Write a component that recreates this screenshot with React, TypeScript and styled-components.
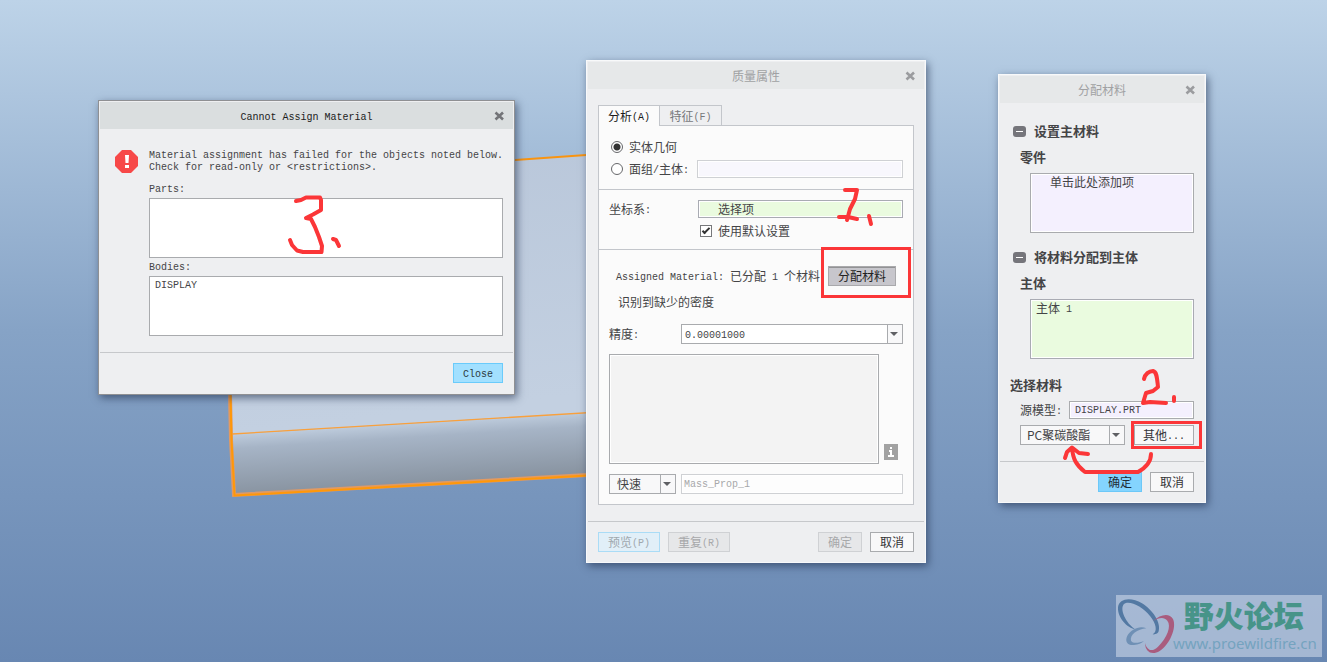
import React from "react";
import styled, { createGlobalStyle, css } from "styled-components";

const CJK = `"Noto Sans CJK SC", sans-serif`;
const MONO = `"Liberation Mono", "Noto Sans CJK SC", monospace`;

const GlobalStyle = createGlobalStyle`
  *, *::before, *::after { box-sizing: border-box; }
  body { margin: 0; }
  button, input, select, textarea { font: inherit; color: inherit; margin: 0; border-radius: 0; }
`;

const Desktop = styled.main`
  position: relative;
  min-height: 100vh;
  min-width: 1206px;
  overflow: hidden;
  background: linear-gradient(#bdd3e8 0%, #86a3c6 50%, #6887b2 100%);
  font-family: ${CJK};
  font-size: 12px;
  line-height: 20px;
  color: #444446;
`;

const Scene = styled.svg`
  position: absolute;
  left: 0;
  top: 0;
`;

const Marks = styled(Scene)`
  pointer-events: none;
  fill: none;
  stroke: #fb3638;
  stroke-width: 4;
  stroke-linecap: round;
  stroke-linejoin: round;
`;

const Latin = styled.span`
  font-family: ${MONO};
  font-size: 10px;
  line-height: 10px;
  vertical-align: 1px;
  white-space: pre;
`;

/* ---------- windows ---------- */

const Window = styled.section<{ $x: number; $y: number; $w: number; $active?: boolean }>`
  position: absolute;
  left: ${(p) => p.$x}px;
  top: ${(p) => p.$y}px;
  width: ${(p) => p.$w}px;
  padding: 1px;
  background: #eeeff1;
  border: 1px solid ${(p) => (p.$active ? "#8f9093" : "#f8f9fa")};
  box-shadow: 2px 3px 8px rgba(30, 45, 75, 0.6);
`;

const TitleBar = styled.header<{ $active?: boolean }>`
  display: grid;
  grid-template-columns: 28px 1fr 28px;
  align-items: center;
  height: 27px;
  background: ${(p) => (p.$active ? "#dadedf" : "#e6e8e9")};
  color: ${(p) => (p.$active ? "#1c1c1c" : "#a0a1a3")};
`;

const Title = styled.h1`
  grid-column: 2;
  margin: 0;
  font-size: 12px;
  font-weight: 400;
  text-align: center;
`;

const CloseButton = styled.button`
  display: grid;
  place-items: center;
  height: 20px;
  padding: 0;
  border: 0;
  background: none;
`;

const Footer = styled.footer<{ $bottom: number }>`
  display: flex;
  gap: 8px;
  padding: 10px 10px ${(p) => p.$bottom}px;
  border-top: 1px solid #c6c8cb;
`;

const Spacer = styled.span`
  flex: 1;
`;

const tones = {
  plain: css`background: #f8f8f9; border-color: #a9abae; color: #333336;`,
  disabled: css`background: #e6e7e9; border-color: #cfd1d4; color: #a7a8aa;`,
  preview: css`background: #e1eff8; border-color: #aadcf6; color: #a0a8ae;`,
  primary: css`background: #84d4fe; border-color: #6cc8f8; color: #1f2c36;`,
  close: css`background: #a2e0ff; border-color: #6acbfb; color: #2c3a42;`,
  pressed: css`background: #c7c6cc; border-color: #a9a9ac; box-shadow: inset 0 1px 0 #929294; color: #222;`,
};

const Button = styled.button<{ $w: number; $tone?: keyof typeof tones }>`
  width: ${(p) => p.$w}px;
  height: 20px;
  padding: 0;
  border: 1px solid;
  line-height: 18px;
  white-space: nowrap;
  ${(p) => tones[p.$tone ?? "plain"]}
`;

/* ---------- fields ---------- */

const fieldTones = {
  faint: css`background: #f8f7fd; border-color: #cfd1d4;`,
  lilac: css`background: #f4f0fe; border-color: #a9abae;`,
  green: css`background: #eafbdf; border-color: #a9abb3;`,
  white: css`background: #fff; border-color: #a9abae;`,
  muted: css`background: #fdfdfd; border-color: #cfd1d4; color: #a7a8aa;`,
};

const latinField = css`
  font-family: ${MONO};
  font-size: 10px;
  padding-top: 2px;
`;

const TextField = styled.input<{ $tone: keyof typeof fieldTones; $indent?: number; $latin?: boolean; $tall?: boolean }>`
  flex: 1;
  min-width: 0;
  height: ${(p) => (p.$tall ? 20 : 18)}px;
  padding: 0 0 0 ${(p) => p.$indent ?? 4}px;
  border: 1px solid;
  box-shadow: inset 0 0 0 1px #fff;
  outline: 0;
  ${(p) => p.$latin && latinField}
  ${(p) => fieldTones[p.$tone]}
`;

const ListBox = styled.ul<{ $tone: keyof typeof fieldTones; $indent?: number }>`
  height: 60px;
  margin: 0;
  padding: 0 0 0 ${(p) => p.$indent ?? 5}px;
  list-style: none;
  line-height: 16px;
  border: 1px solid;
  box-shadow: inset 0 0 0 1px #fff;
  ${(p) => fieldTones[p.$tone]}
`;

const ComboFrame = styled.span<{ $w?: number; $white?: boolean }>`
  position: relative;
  display: flex;
  ${(p) => (p.$w ? `width: ${p.$w}px;` : "flex: 1;")}
  height: 20px;
  border: 1px solid #a9abae;
  background: linear-gradient(to left, #f8f8f9 14px, #a9abae 14px, #a9abae 15px, ${(p) => (p.$white ? "#fff" : "#f8f8f9")} 15px);

  &::after {
    content: "";
    position: absolute;
    right: 4px;
    top: 7px;
    border: 4px solid transparent;
    border-top-color: #5f6064;
    border-bottom: 0;
    pointer-events: none;
  }
`;

const ComboSelect = styled.select<{ $indent: number; $latin?: boolean }>`
  appearance: none;
  flex: 1;
  min-width: 0;
  padding: 0 16px 0 ${(p) => p.$indent}px;
  border: 0;
  outline: 0;
  background: transparent;
  line-height: 18px;
  ${(p) => p.$latin && latinField}
`;

/* ---------- error dialog ---------- */

const ErrorBody = styled.div`
  display: grid;
  grid-template-columns: 24px 1fr;
  column-gap: 10px;
  padding: 21px 10px 16px 15px;
`;

const ErrorText = styled.div`
  font-family: ${MONO};
  font-size: 10px;
  min-width: 0;

  li { line-height: 18px; }
`;

const Message = styled.p`
  margin: 0 0 6px;
  line-height: 12px;
  white-space: nowrap;
`;

const ListLabel = styled.div`
  height: 18px;
  line-height: 20px;
`;

/* ---------- mass properties dialog ---------- */

const MassBody = styled.div`
  padding: 16px 10px;
`;

const Tabs = styled.div`
  display: flex;
  align-items: flex-start;
  margin-bottom: -1px;
`;

const Tab = styled.button<{ $selected?: boolean }>`
  position: relative;
  width: ${(p) => (p.$selected ? 62 : 63)}px;
  height: ${(p) => (p.$selected ? 21 : 20)}px;
  padding: 0;
  border: 1px solid #c3c6cb;
  border-bottom: 0;
  background: ${(p) => (p.$selected ? "#fbfbfb" : "#eeeff1")};
  color: ${(p) => (p.$selected ? "#1c1c1c" : "#77787b")};
  & + & { margin-left: -1px; }
`;

const Panel = styled.div`
  border: 1px solid #c3c6cb;
  background: #fbfbfb;
`;

const Section = styled.div<{ $top: number; $bottom: number; $gap?: number }>`
  display: flex;
  flex-direction: column;
  gap: ${(p) => p.$gap ?? 0}px;
  padding: ${(p) => p.$top}px 10px ${(p) => p.$bottom}px;
  & + & { border-top: 1px solid #c3c6cb; }
`;

const Row = styled.div<{ $gap?: number; $inset?: number; $end?: boolean }>`
  display: flex;
  align-items: ${(p) => (p.$end ? "flex-end" : "center")};
  gap: ${(p) => p.$gap ?? 0}px;
  min-height: 20px;
  padding: 0 ${(p) => p.$inset ?? 0}px;
`;

const Label = styled.label<{ $w?: number }>`
  flex: none;
  white-space: nowrap;
  ${(p) => p.$w && `width: ${p.$w}px;`}
`;

const ChoiceLabel = styled.label<{ $w?: number; $start?: number }>`
  display: flex;
  align-items: center;
  gap: 6px;
  flex: none;
  padding-left: 2px;
  margin-left: ${(p) => p.$start ?? 0}px;
  ${(p) => p.$w && `width: ${p.$w}px;`}
`;

const Radio = styled.input`
  appearance: none;
  width: 12px;
  height: 12px;
  border: 1px solid #66676a;
  && { border-radius: 50%; }
  background: #fff;
  &:checked { background: radial-gradient(circle, #333 0 3px, #fff 4px); }
`;

const Check = styled.input`
  appearance: none;
  width: 12px;
  height: 12px;
  border: 1px solid #77787b;
  background: #fff;
  display: grid;
  place-items: center;
  &:checked::before {
    content: "";
    width: 8px;
    height: 4px;
    border-left: 2px solid #333;
    border-bottom: 2px solid #333;
    transform: translateY(-1px) rotate(-45deg);
  }
`;

const Results = styled.textarea`
  width: 270px;
  height: 110px;
  resize: none;
  border: 1px solid #a9abae;
  background: #f3f3f3;
  box-shadow: inset 0 0 0 1px #fff;
  outline: 0;
`;

const InfoButton = styled.button`
  width: 14px;
  height: 16px;
  margin-bottom: 4px;
  padding: 0;
  border: 0;
  background: #a2a2a2;
  display: grid;
  place-items: center;
`;

const Stack = styled.div<{ $gap: number }>`
  display: flex;
  flex-direction: column;
  gap: ${(p) => p.$gap}px;
`;

/* ---------- assign material dialog ---------- */

const AssignBody = styled.div`
  display: flex;
  flex-direction: column;
  padding: 18px 10px 16px;
`;

const GroupHead = styled.h2<{ $before?: number; $start?: number }>`
  display: flex;
  align-items: center;
  gap: 8px;
  margin: ${(p) => p.$before ?? 0}px 0 0 ${(p) => p.$start ?? 0}px;
  font-size: 13px;
  font-weight: 700;
  line-height: 20px;
`;

const SubHead = styled.h3`
  margin: 6px 0 6px 10px;
  font-size: 13px;
  font-weight: 700;
  line-height: 20px;
`;

const FoldButton = styled.button`
  width: 13px;
  height: 11px;
  padding: 0;
  border: 0;
  background: none;
  display: grid;
`;

const Indented = styled.div<{ $start: number }>`
  margin-left: ${(p) => p.$start}px;
`;

const SourceRows = styled(Stack)`
  margin: 5px 0 0 10px;
`;

/* ---------- watermark ---------- */

const Watermark = styled.aside`
  position: absolute;
  right: 5px;
  bottom: 5px;
  width: 206px;
  height: 62px;
  display: flex;
  background: rgba(214, 222, 236, 0.55);
`;

const ForumLogo = styled.svg`
  flex: none;
`;

const WatermarkText = styled.div`
  display: flex;
  flex-direction: column;
  align-items: flex-end;
  margin-left: -5px;
  padding-right: 4px;
`;

const ForumName = styled.strong`
  padding-right: 13px;
  font-size: 30px;
  line-height: 38px;
  font-weight: 900;
  color: #479489;
`;

const ForumLink = styled.a`
  font-family: "Noto Sans", sans-serif;
  font-size: 15px;
  line-height: 20px;
  color: #74a3bf;
  text-decoration: none;
`;

const CloseIcon = ({ color }: { color: string }) => (
  <svg width="10" height="10" viewBox="0 0 10 10" aria-hidden="true">
    <path d="M1.5 1.5 9 8.500M9 1.5 1.5 8.500" stroke={color} strokeWidth="2.6" />
  </svg>
);

const FoldIcon = () => (
  <svg width="13" height="11" viewBox="0 0 13 11" aria-hidden="true">
    <rect width="13" height="11" rx="3" fill="#75757b" />
    <path d="M3 5.5H10" stroke="#fff" strokeWidth="1" />
  </svg>
);

type BarProps = { active?: boolean; children: React.ReactNode };

const Bar = ({ active, children }: BarProps) => (
  <TitleBar $active={active}>
    <Title>{children}</Title>
    <CloseButton aria-label="Close window">
      <CloseIcon color={active ? "#737478" : "#9b9c9f"} />
    </CloseButton>
  </TitleBar>
);

const Model = () => (
  <Scene width="900" height="662" viewBox="0 0 900 662" aria-hidden="true">
    <defs>
      <linearGradient id="face" x1="230" y1="160" x2="260" y2="430" gradientUnits="userSpaceOnUse">
        <stop offset="0" stopColor="#b9c7da" />
        <stop offset="1" stopColor="#c3d0e1" />
      </linearGradient>
      <linearGradient id="edge" x1="400" y1="424" x2="404" y2="487" gradientUnits="userSpaceOnUse">
        <stop offset="0" stopColor="#bdcbdc" />
        <stop offset="0.22" stopColor="#a6b4c6" />
        <stop offset="1" stopColor="#87929f" />
      </linearGradient>
    </defs>
    <path d="M230 180 800 140V400L232 434Z" fill="url(#face)" />
    <path d="M232 434 800 400V462L234 496Z" fill="url(#edge)" />
    <path d="M230 180 800 140" stroke="#f99410" strokeWidth="2" />
    <path d="M232 434 800 400" stroke="#f9a03c" strokeWidth="1.3" />
    <path d="M230 180V395L231 440 234 495 800 463" fill="none" stroke="#e29a63" strokeWidth="4" />
    <path d="M230.500 180V395L231.500 440 234.500 495.500 800 463.500" fill="none" stroke="#ff9808" strokeWidth="2" />
  </Scene>
);

const ErrorDialog = () => (
  <Window $x={98} $y={100} $w={417} $active role="alertdialog">
    <Bar active><Latin>Cannot Assign Material</Latin></Bar>
    <ErrorBody>
      <svg width="24" height="24" viewBox="0 0 24 24" aria-hidden="true">
        <path d="M7 0H16L23 7V16L16 23H7L0 16V7Z" fill="#f74848" />
        <path d="M10 5H14L13.500 13H10.500ZM10 15H14V18H10Z" fill="#fff" />
      </svg>
      <ErrorText>
        <Message>
          Material assignment has failed for the objects noted below.
          <br />
          Check for read-only or &lt;restrictions&gt;.
        </Message>
        <ListLabel id="parts">Parts:</ListLabel>
        <ListBox $tone="white" aria-labelledby="parts" />
        <ListLabel id="bodies">Bodies:</ListLabel>
        <ListBox $tone="white" aria-labelledby="bodies"><li>DISPLAY</li></ListBox>
      </ErrorText>
    </ErrorBody>
    <Footer $bottom={10}>
      <Spacer />
      <Button $w={50} $tone="close"><Latin>Close</Latin></Button>
    </Footer>
  </Window>
);

const MassDialog = () => (
  <Window $x={586} $y={60} $w={340} role="dialog">
    <Bar>质量属性</Bar>
    <MassBody>
      <Tabs role="tablist">
        <Tab role="tab" aria-selected="true" $selected>分析<Latin>(A)</Latin></Tab>
        <Tab role="tab" aria-selected="false">特征<Latin>(F)</Latin></Tab>
      </Tabs>
      <Panel>
        <Section $top={11} $bottom={10} $gap={2}>
          <Row>
            <ChoiceLabel><Radio type="radio" name="geom" defaultChecked />实体几何</ChoiceLabel>
          </Row>
          <Row>
            <ChoiceLabel $w={88}>
              <Radio type="radio" name="geom" />
              <span>面组<Latin>/</Latin>主体<Latin>:</Latin></span>
            </ChoiceLabel>
            <TextField $tone="faint" aria-label="面组/主体" />
          </Row>
        </Section>
        <Section $top={9} $bottom={8} $gap={2}>
          <Row>
            <Label $w={89} htmlFor="csys">坐标系<Latin>:</Latin></Label>
            <TextField id="csys" $tone="green" $indent={19} defaultValue="选择项" />
          </Row>
          <Row>
            <ChoiceLabel $start={89}><Check type="checkbox" defaultChecked />使用默认设置</ChoiceLabel>
          </Row>
        </Section>
        <Section $top={16} $bottom={10} $gap={12}>
          <Stack $gap={6}>
            <Row $inset={7}>
              <Label as="span"><Latin>Assigned Material: </Latin>已分配<Latin> 1 </Latin>个材料</Label>
              <Spacer />
              <Button $w={68} $tone="pressed">分配材料</Button>
            </Row>
            <Row $inset={9}>识别到缺少的密度</Row>
          </Stack>
          <Stack $gap={10}>
            <Row>
              <Label $w={72} htmlFor="precision">精度<Latin>:</Latin></Label>
              <ComboFrame $white>
                <ComboSelect id="precision" $indent={3} $latin><option>0.00001000</option></ComboSelect>
              </ComboFrame>
            </Row>
            <Row $gap={5} $end>
              <Results aria-label="结果" readOnly />
              <InfoButton aria-label="信息">
                <svg width="8" height="12" viewBox="0 0 8 12" aria-hidden="true">
                  <path d="M3 1H5V3H3ZM2 4H5V9H7V11H1V9H3V6H2Z" fill="#fff" />
                </svg>
              </InfoButton>
            </Row>
            <Row $gap={5}>
              <ComboFrame $w={67}>
                <ComboSelect $indent={7} aria-label="模式"><option>快速</option></ComboSelect>
              </ComboFrame>
              <TextField $tone="muted" $tall $latin $indent={2} defaultValue="Mass_Prop_1" aria-label="名称" />
            </Row>
          </Stack>
        </Section>
      </Panel>
    </MassBody>
    <Footer $bottom={9}>
      <Button $w={62} $tone="preview" disabled>预览<Latin>(P)</Latin></Button>
      <Button $w={62} $tone="disabled" disabled>重复<Latin>(R)</Latin></Button>
      <Spacer />
      <Button $w={44} $tone="disabled" disabled>确定</Button>
      <Button $w={44}>取消</Button>
    </Footer>
  </Window>
);

const AssignDialog = () => (
  <Window $x={998} $y={74} $w={208} role="dialog">
    <Bar>分配材料</Bar>
    <AssignBody>
      <GroupHead $start={3}>
        <FoldButton aria-label="折叠"><FoldIcon /></FoldButton>设置主材料
      </GroupHead>
      <SubHead>零件</SubHead>
      <Indented $start={20}>
        <ListBox $tone="lilac" $indent={19}><li>单击此处添加项</li></ListBox>
      </Indented>
      <GroupHead $start={3} $before={14}>
        <FoldButton aria-label="折叠"><FoldIcon /></FoldButton>将材料分配到主体
      </GroupHead>
      <SubHead>主体</SubHead>
      <Indented $start={20}>
        <ListBox $tone="green"><li>主体<Latin> 1</Latin></li></ListBox>
      </Indented>
      <GroupHead $before={16}>选择材料</GroupHead>
      <SourceRows $gap={5}>
        <Row>
          <Label $w={49} htmlFor="source">源模型<Latin>:</Latin></Label>
          <TextField id="source" $tone="lilac" $latin $indent={5} defaultValue="DISPLAY.PRT" />
        </Row>
        <Row $gap={9}>
          <ComboFrame>
            <ComboSelect $indent={6} aria-label="材料"><option>PC聚碳酸酯</option></ComboSelect>
          </ComboFrame>
          <Button $w={60}>其他<Latin>...</Latin></Button>
        </Row>
      </SourceRows>
    </AssignBody>
    <Footer $bottom={9}>
      <Spacer />
      <Button $w={44} $tone="primary">确定</Button>
      <Button $w={44}>取消</Button>
    </Footer>
  </Window>
);

const RedMarks = () => (
  <Marks width="1327" height="662" viewBox="0 0 1327 662" aria-hidden="true">
    <path d="M845 190H857L855 199 850 209 847 220M839 217 848 217 857 219M869 216 871 224" />
    <path d="M296 201 301 200 306 197.500H320L321 200V210L313 214.500 306 218 311 219 315 227 319 237 322 246 321.500 252H303L297 250.500 292 245 290 240M333 239 336 240 339 246" />
    <path d="M1144 379C1145 374 1149 371 1153 371 1157 372 1157 378 1158 387L1153 391 1146 393 1143 403 1150 402 1166 403M1174 397V401" />
    <path d="M1151 454C1151 460 1147 467 1138 472H1085C1076 465 1073 459 1072 448M1065 458 1067 452 1072 447.500 1079 453 1088 454" />
    <g strokeWidth="3" strokeLinejoin="miter">
      <rect x="822.500" y="248.500" width="87" height="48" />
      <rect x="1132.500" y="422.500" width="68" height="25" />
    </g>
  </Marks>
);

const ForumMark = () => (
  <Watermark>
    <ForumLogo width="62" height="62" viewBox="6 3 186 186" aria-hidden="true">
      <path d="M66 107C38 102 10 70 12 40 15 12 52 8 84 28 116 48 142 86 134 112 132 118 126 122 116 121 132 112 126 88 108 66 86 38 46 18 30 30 16 44 34 88 66 107Z" fill="#5379a3" />
      <path d="M117 81C140 60 166 56 177 75 189 101 167 152 137 171 115 184 94 176 93 147 100 172 116 174 132 158 159 132 173 96 160 80 150 68 136 70 117 81Z" fill="#a95c7e" />
      <path d="M97 103C77 93 50 107 40 125 31 143 42 155 60 153 73 152 83 148 90 141 75 147 57 150 51 140 47 123 70 105 97 103Z" fill="#6f90b5" />
    </ForumLogo>
    <WatermarkText>
      <ForumName>野火论坛</ForumName>
      <ForumLink href="#forum">www.proewildfire.cn</ForumLink>
    </WatermarkText>
  </Watermark>
);

export default function App() {
  return (
    <>
      <GlobalStyle />
      <Desktop>
        <Model />
        <MassDialog />
        <AssignDialog />
        <ErrorDialog />
        <RedMarks />
        <ForumMark />
      </Desktop>
    </>
  );
}
